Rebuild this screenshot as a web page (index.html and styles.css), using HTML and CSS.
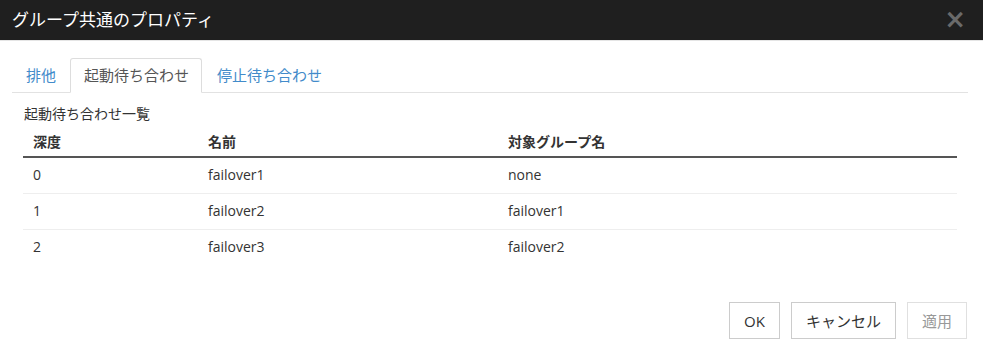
FILE: index.html
```html
<!DOCTYPE html>
<html lang="ja">
<head>
    <meta charset="UTF-8">
    <title>グループ共通のプロパティ</title>
    <link rel="stylesheet" href="styles.css">
</head>
<body>
    <div class="dialog">
        <header class="dialog-header">
            <h4>グループ共通のプロパティ</h4>
            <span class="close">&times;</span>
        </header>
        <div class="dialog-body">
            <ul class="tabs">
                <li><a>排他</a></li>
                <li class="active"><a>起動待ち合わせ</a></li>
                <li><a>停止待ち合わせ</a></li>
            </ul>
            <div class="pane">
                <p class="caption">起動待ち合わせ一覧</p>
                <table>
                    <thead>
                        <tr>
                            <th class="col-depth">深度</th>
                            <th class="col-name">名前</th>
                            <th>対象グループ名</th>
                        </tr>
                    </thead>
                    <tbody>
                        <tr><td>0</td><td>failover1</td><td>none</td></tr>
                        <tr><td>1</td><td>failover2</td><td>failover1</td></tr>
                        <tr><td>2</td><td>failover3</td><td>failover2</td></tr>
                    </tbody>
                </table>
            </div>
        </div>
        <footer class="dialog-footer">
            <button>OK</button>
            <button>キャンセル</button>
            <button class="disabled" disabled>適用</button>
        </footer>
    </div>
</body>
</html>
```

FILE: styles.css
```css
body {
    margin: 0;
    padding: 0;
    font-family: "Open Sans", "Noto Sans CJK JP", sans-serif;
    background-color: #fff;
    color: #333;
}

.dialog {
    width: 983px;
    height: 350px;
    display: flex;
    flex-direction: column;
}

.dialog-header {
    height: 40px;
    background-color: #1f1f1f;
    border-bottom: 1px solid #e5e5e5;
    display: flex;
    align-items: center;
    justify-content: space-between;
    padding: 0 17px 0 12px;
}

.dialog-header h4 {
    margin: 0;
    font-size: 17px;
    font-weight: normal;
    color: #fff;
    line-height: 1;
    margin-top: -2px;
}

.close {
    font-family: "DejaVu Sans", sans-serif;
    font-size: 26px;
    font-weight: bold;
    color: #6a6a6a;
    line-height: 1;
    margin-top: -2px;
}

.dialog-body {
    padding: 17px 15px 0 12px;
}

.tabs {
    list-style: none;
    margin: 0;
    padding: 0;
    display: flex;
    border-bottom: 1px solid #e2e2e2;
}

.tabs li {
    margin-right: 1px;
    margin-bottom: -1px;
}

.tabs a {
    display: block;
    height: 33px;
    line-height: 33px;
    padding: 0 12px 0 13px;
    font-size: 15px;
    color: #428bca;
    border: 1px solid transparent;
    border-radius: 3px 3px 0 0;
}

.tabs li.active a {
    color: #555;
    background-color: #fff;
    border-color: #ddd;
    border-bottom-color: #fff;
}

.pane {
    padding: 0 11px 0 11px;
}

.caption {
    margin: 11px 0 0 1px;
    font-size: 14px;
    line-height: 20px;
}

table {
    width: 934px;
    table-layout: fixed;
    border-collapse: collapse;
    font-size: 14px;
    margin-top: 5px;
}

th {
    text-align: left;
    font-weight: bold;
    padding: 4px 10px 5px;
    line-height: 18px;
    border-bottom: 2px solid #555;
}

.col-depth {
    width: 155px;
}

.col-name {
    width: 280px;
}

td {
    padding: 7px 10px 9px;
    line-height: 19px;
    border-top: 1px solid #eee;
}

tbody tr:first-child td {
    border-top: none;
}

.dialog-footer {
    margin-top: auto;
    display: flex;
    justify-content: flex-end;
    gap: 11px;
    padding: 0 16px 11px 0;
}

button {
    height: 37px;
    padding: 0 14px;
    font-family: "Open Sans", "Noto Sans CJK JP", sans-serif;
    font-size: 15px;
    color: #333;
    background-color: #fff;
    border: 1px solid #ccc;
    border-radius: 0;
}

button.disabled {
    color: #999;
    border-color: #e0e0e0;
}
```
